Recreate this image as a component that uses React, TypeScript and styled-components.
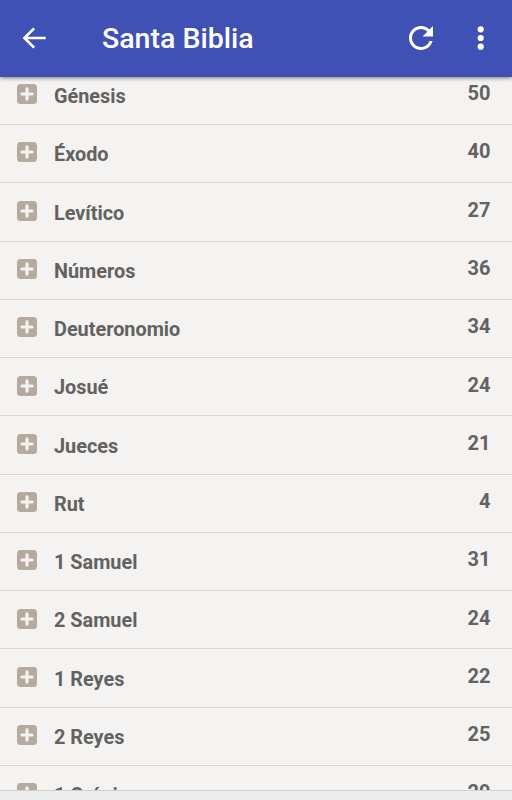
import React from "react";
import styled, { createGlobalStyle } from "styled-components";

const GlobalStyle = createGlobalStyle`
  * { box-sizing: border-box; }
  body { margin: 0; background: #f4f3f1; font-family: Roboto, sans-serif; overflow: hidden; }
`;

const Screen = styled.div`
  width: 512px;
  height: 800px;
  display: flex;
  flex-direction: column;
  overflow: hidden;
  background: #f4f3f1;
`;

const AppBar = styled.header`
  flex: none;
  display: flex;
  align-items: center;
  height: 77.4px;
  padding: 0 13px 1px 18px;
  background: #3f51b5;
  color: #fff;
  box-shadow: 0 1px 4px rgba(0, 0, 0, 0.5);
  z-index: 1;
`;

const Title = styled.h1`
  flex: 1;
  margin: 0 0 0 52px;
  padding-top: 2px;
  font-size: 28.5px;
  line-height: 36px;
  font-weight: 500;
`;

const IconButton = styled.button<{ $gap?: number }>`
  display: flex;
  padding: 0;
  margin-left: ${(p) => p.$gap ?? 0}px;
  border: 0;
  background: none;
  color: inherit;
`;

const List = styled.ul`
  flex: 1;
  min-height: 0;
  margin: -10.6px 0 0;
  padding: 0;
  overflow: hidden;
  list-style: none;
`;

const Row = styled.li`
  display: flex;
  height: 58.28px;
  padding: 17.4px 21.5px 0 17px;
  border-bottom: 1px solid #d9d8d6;
  color: #636261;
  font-size: 20px;
  line-height: 24px;
  font-weight: 700;
`;

const Name = styled.span`
  flex: 1;
  padding-top: 0.8px;
  margin-left: 17px;
  font-size: 19.85px;
`;

const Count = styled.span`
  margin-top: -3px;
`;

const BottomStrip = styled.footer`
  flex: none;
  height: 10px;
  border-top: 1px solid #cfcfcf;
  background: #ededed;
`;

const BackIcon = () => (
  <svg width="32" height="32" viewBox="0 0 24 24" fill="currentColor">
    <path d="M20.8 11.1H7.1l5.7-5.6-1.4-1.4L3.4 12l8 7.9 1.4-1.4-5.7-5.6h13.7z" />
  </svg>
);

const RefreshIcon = () => (
  <svg width="36" height="36" viewBox="0 0 24 24" fill="currentColor">
    <path d="M17.65 6.35C16.2 4.9 14.21 4 12 4c-4.42 0-7.99 3.58-7.99 8s3.57 8 7.99 8c3.73 0 6.84-2.55 7.73-6h-2.08c-.82 2.33-3.04 4-5.65 4-3.31 0-6-2.69-6-6s2.69-6 6-6c1.66 0 3.14.69 4.22 1.78L13 11h7V4l-2.35 2.35z" />
  </svg>
);

const MoreIcon = () => (
  <svg width="36" height="36" viewBox="0 0 36 36" fill="currentColor">
    <circle cx="17.7" cy="9.3" r="3.1" />
    <circle cx="17.7" cy="18" r="3.1" />
    <circle cx="17.7" cy="26.7" r="3.1" />
  </svg>
);

const PlusIcon = () => (
  <svg width="20" height="20" viewBox="0 0 20 20">
    <rect width="20" height="20" rx="3.5" fill="#b4aa9e" />
    <path d="M10 4.9v10.2M4.9 10h10.2" stroke="#f4f3f1" strokeWidth="3.1" strokeLinecap="round" />
  </svg>
);

const books: [string, number][] = [
  ["Génesis", 50],
  ["Éxodo", 40],
  ["Levítico", 27],
  ["Números", 36],
  ["Deuteronomio", 34],
  ["Josué", 24],
  ["Jueces", 21],
  ["Rut", 4],
  ["1 Samuel", 31],
  ["2 Samuel", 24],
  ["1 Reyes", 22],
  ["2 Reyes", 25],
  ["1 Crónicas", 29],
];

export default function App() {
  return (
    <Screen>
      <GlobalStyle />
      <AppBar>
        <IconButton aria-label="Atrás"><BackIcon /></IconButton>
        <Title>Santa Biblia</Title>
        <IconButton aria-label="Actualizar"><RefreshIcon /></IconButton>
        <IconButton aria-label="Más opciones" $gap={24}><MoreIcon /></IconButton>
      </AppBar>
      <List>
        {books.map(([name, count]) => (
          <Row key={name}>
            <PlusIcon />
            <Name>{name}</Name>
            <Count>{count}</Count>
          </Row>
        ))}
      </List>
      <BottomStrip />
    </Screen>
  );
}
